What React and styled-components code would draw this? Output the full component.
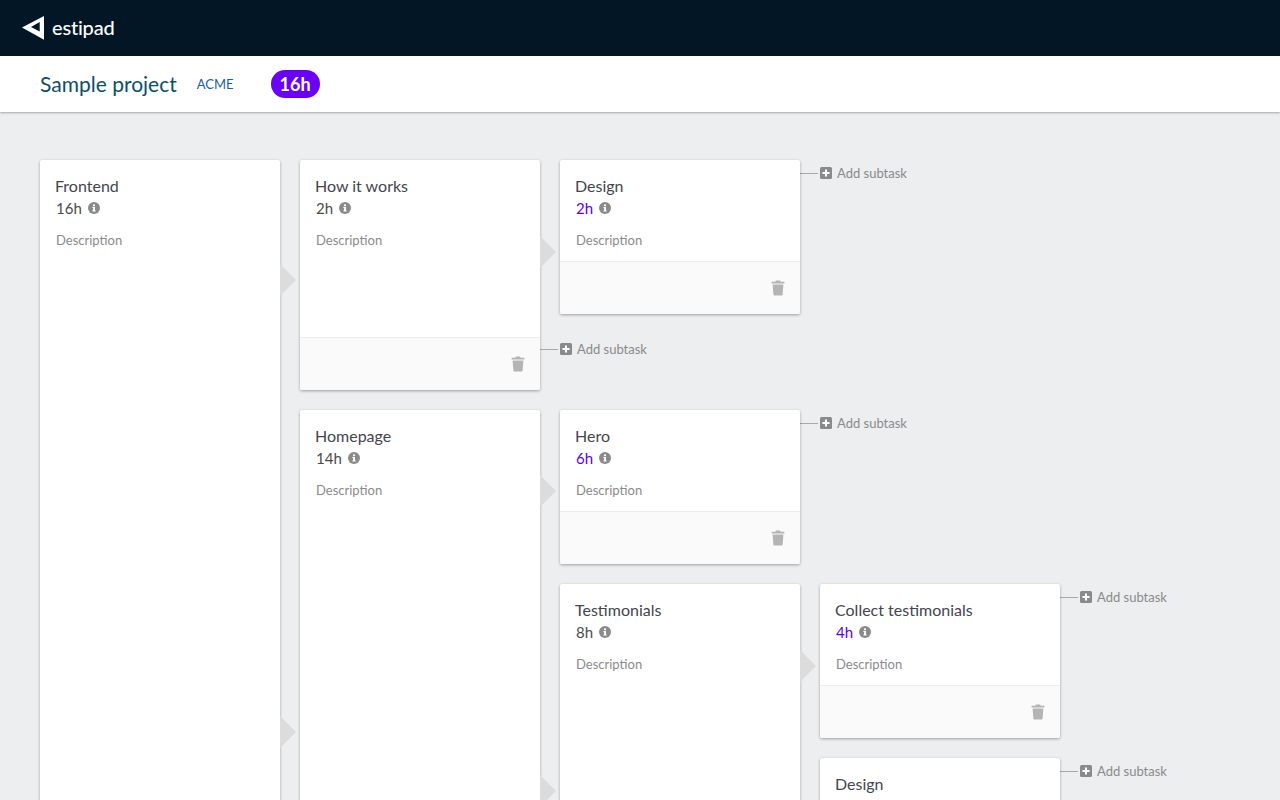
import React from "react";
import styled, { createGlobalStyle } from "styled-components";

const GlobalStyle = createGlobalStyle`
  html, body {
    margin: 0;
    height: 800px;
    overflow: hidden;
    background: #edeef0;
    font-family: Lato, "Liberation Sans", sans-serif;
  }
`;

const TopBar = styled.header`
  height: 56px;
  background: #021626;
  display: flex;
  align-items: center;
  padding-left: 21px;
`;

const LogoText = styled.span`
  color: #fff;
  font-size: 20px;
  font-weight: 500;
  margin: 0 0 2px 7px;
  letter-spacing: -0.2px;
`;

const ProjectBar = styled.div`
  height: 56px;
  background: #fff;
  display: flex;
  align-items: center;
  padding: 0 0 2px 40px;
  box-sizing: border-box;
  box-shadow: 0 1px 2px rgba(0, 0, 0, 0.3);
  position: relative;
`;

const ProjectName = styled.h1`
  margin: 0;
  font-size: 21px;
  font-weight: 400;
  color: #0b4f6c;
`;

const Client = styled.span`
  margin: 2px 0 0 20px;
  font-size: 13px;
  color: #1a5fa8;
`;

const TotalBadge = styled.span`
  margin: 2px 0 0 37px;
  height: 28px;
  width: 49px;
  border-radius: 14px;
  background: #6a00f4;
  color: #fff;
  font-size: 18px;
  font-weight: 700;
  display: flex;
  align-items: center;
  justify-content: center;
`;

const Board = styled.main`
  padding: 48px 0 0 40px;
`;

const Node = styled.div`
  display: flex;
  gap: 20px;
  position: relative;
`;

const Children = styled.div`
  display: flex;
  flex-direction: column;
  gap: 20px;
`;

const Card = styled.section`
  width: 240px;
  flex: none;
  min-height: 154px;
  box-sizing: border-box;
  background: #fff;
  border-radius: 2px;
  box-shadow: 0 1px 3px rgba(0, 0, 0, 0.35);
  display: flex;
  flex-direction: column;
  position: relative;
`;

const CardBody = styled.div`
  flex: 1;
  min-height: 101px;
  box-sizing: border-box;
  padding: 16px 16px 0;
`;

const Title = styled.h2`
  margin: 0 0 0 -1px;
  font-size: 16px;
  line-height: 20px;
  font-weight: 400;
  color: #44454d;
`;

const Estimate = styled.div`
  display: flex;
  align-items: center;
  gap: 6px;
  margin-top: 2px;
  font-size: 15px;
  line-height: 20px;
  color: ${(p) => (p.$own ? "#5a00f0" : "#4a4a4a")};
`;

const Description = styled.p`
  margin: 12px 0 0;
  font-size: 13px;
  line-height: 20px;
  color: #8a8a8a;
`;

const CardFooter = styled.footer`
  height: 53px;
  box-sizing: border-box;
  background: #fafafa;
  border-top: 1px solid #ececec;
  border-radius: 0 0 2px 2px;
  display: flex;
  justify-content: flex-end;
  align-items: flex-start;
  padding: 18px 15px 0 0;
`;

const Arrow = styled.span`
  position: absolute;
  left: 100%;
  top: ${(p) => p.$top}px;
  width: 0;
  height: 0;
  border-style: solid;
  border-width: 16px 0 16px 16px;
  border-color: transparent transparent transparent #dcdcdc;
`;

const AddRow = styled.div`
  display: flex;
  align-items: center;
  height: 26px;
  color: #8a8a8a;
  font-size: 13px;
  margin-left: -20px;
  margin-top: ${(p) => (p.$below ? "2px" : "0")};
  margin-bottom: ${(p) => (p.$below ? "28px" : "0")};
`;

const Connector = styled.span`
  width: 18px;
  height: 1px;
  background: #a8a8a8;
  margin-right: 2px;
`;

const AddLabel = styled.span`
  margin-left: 5px;
`;

function LogoMark() {
  return (
    <svg width="24" height="26" viewBox="0 0 24 26">
      <path
        fill="#fff"
        fillRule="evenodd"
        d="M1 12.5 23 1 V24.8 Z M10 12 L18.7 16.6 V7 Z"
      />
    </svg>
  );
}

function InfoIcon() {
  return (
    <svg width="12" height="12" viewBox="0 0 12 12">
      <circle cx="6" cy="6" r="6" fill="#8a8a8a" />
      <rect x="5" y="2.4" width="2" height="1.8" fill="#fff" />
      <path d="M4.4 5h2.6v3.6h.7v1H4.4v-1h.7V6h-.7z" fill="#fff" />
    </svg>
  );
}

function TrashIcon() {
  return (
    <svg width="14" height="16" viewBox="0 0 14 16">
      <path
        fill="#b4b4b4"
        d="M5 0.6h4l.7 1.2H13.4v1.8H.6V1.8h3.7zM1.6 4.6h10.8l-.8 10.2c0 .4-.4.7-.8.7H3.2c-.4 0-.8-.3-.8-.7z"
      />
    </svg>
  );
}

function PlusIcon() {
  return (
    <svg width="12" height="12" viewBox="0 0 12 12">
      <rect width="12" height="12" rx="1.5" fill="#8a8a8a" />
      <path d="M5 2.4h2V5h2.6v2H7v2.6H5V7H2.4V5H5z" fill="#fff" />
    </svg>
  );
}

function AddSubtask({ below }) {
  return (
    <AddRow $below={below}>
      <Connector />
      <PlusIcon />
      <AddLabel>Add subtask</AddLabel>
    </AddRow>
  );
}

function Task({ title, hours, own, arrows = [], children }) {
  return (
    <Node>
      <Card>
        <CardBody>
          <Title>{title}</Title>
          <Estimate $own={own}>
            {hours}
            <InfoIcon />
          </Estimate>
          <Description>Description</Description>
        </CardBody>
        <CardFooter>
          <TrashIcon />
        </CardFooter>
        {arrows.map((top) => (
          <Arrow key={top} $top={top} />
        ))}
      </Card>
      {children}
    </Node>
  );
}

export default function App() {
  return (
    <>
      <GlobalStyle />
      <TopBar>
        <LogoMark />
        <LogoText>estipad</LogoText>
      </TopBar>
      <ProjectBar>
        <ProjectName>Sample project</ProjectName>
        <Client>ACME</Client>
        <TotalBadge>16h</TotalBadge>
      </ProjectBar>
      <Board>
        <Task title="Frontend" hours="16h" arrows={[104, 556]}>
          <Children>
            <Task title="How it works" hours="2h" arrows={[76]}>
              <Children>
                <Task title="Design" hours="2h" own>
                  <AddSubtask />
                </Task>
                <AddSubtask below />
              </Children>
            </Task>
            <Task title="Homepage" hours="14h" arrows={[65, 365]}>
              <Children>
                <Task title="Hero" hours="6h" own>
                  <AddSubtask />
                </Task>
                <Task title="Testimonials" hours="8h" arrows={[66]}>
                  <Children>
                    <Task title="Collect testimonials" hours="4h" own>
                      <AddSubtask />
                    </Task>
                    <Task title="Design" hours="4h" own>
                      <AddSubtask />
                    </Task>
                    <AddSubtask below />
                  </Children>
                </Task>
                <AddSubtask below />
              </Children>
            </Task>
            <AddSubtask below />
          </Children>
        </Task>
      </Board>
    </>
  );
}
